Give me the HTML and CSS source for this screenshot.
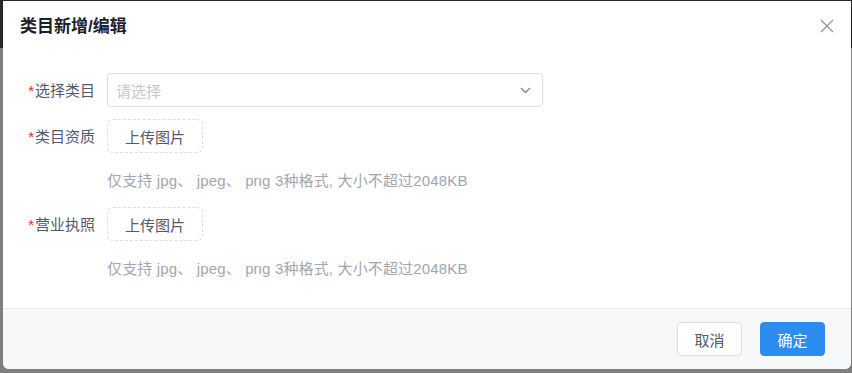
FILE: index.html
```html
<!DOCTYPE html>
<html>
	<head>
		<meta charset="utf-8">
		<link rel="stylesheet" href="styles.css">
	</head>

	<body>
		<div class="backdrop">
			<div class="page-header"></div>
		</div>

		<div class="modal">
			<div class="modal-header">
				<h2 class="modal-title">类目新增/编辑</h2>
				<button class="close-btn" type="button">
					<svg width="14" height="14" viewBox="0 0 14 14">
						<path d="M1 1 L13 13 M13 1 L1 13" stroke="#8f959e" stroke-width="1.2" fill="none"/>
					</svg>
				</button>
			</div>

			<div class="modal-body">
				<form class="form">
					<div class="form-item">
						<label class="form-label"><span class="required">*</span>选择类目</label>
						<div class="form-control">
							<div class="select">
								<span class="placeholder">请选择</span>
								<svg width="11" height="7" viewBox="0 0 11 7">
									<path d="M1 1 L5.5 5.5 L10 1" stroke="#808695" stroke-width="1.4" fill="none"/>
								</svg>
							</div>
						</div>
					</div>

					<div class="form-item">
						<label class="form-label"><span class="required">*</span>类目资质</label>
						<div class="form-control">
							<div class="upload-btn">上传图片</div>
							<div class="hint">仅支持 jpg、 jpeg、 png 3种格式, 大小不超过2048KB</div>
						</div>
					</div>

					<div class="form-item">
						<label class="form-label"><span class="required">*</span>营业执照</label>
						<div class="form-control">
							<div class="upload-btn">上传图片</div>
							<div class="hint">仅支持 jpg、 jpeg、 png 3种格式, 大小不超过2048KB</div>
						</div>
					</div>
				</form>
			</div>

			<div class="modal-footer">
				<button class="btn" type="button">取消</button>
				<button class="btn btn-primary" type="button">确定</button>
			</div>
		</div>
	</body>
</html>
```

FILE: styles.css
```css
* {
	box-sizing: border-box;
}

body {
	margin: 0;
	height: 373px;
	overflow: hidden;
	background: #7f7f7f;
	font-family: "Liberation Sans", "Noto Sans CJK SC", sans-serif;
	font-size: 15px;
	color: #515a6e;
}

.page-header {
	height: 48px;
	background: #262626;
}

.modal {
	position: absolute;
	top: 1px;
	left: 3px;
	width: 848px;
	background: white;
	border-radius: 0 0 6px 6px;
	overflow: hidden;
}

.modal-header {
	display: flex;
	align-items: center;
	justify-content: space-between;
	padding: 14px 17px 0 17px;
}

.modal-title {
	margin: 0;
	font-size: 17px;
	line-height: 24px;
	font-weight: bold;
	color: #1d2129;
}

.close-btn {
	margin-top: -3px;
	padding: 0;
	border: none;
	background: none;
	display: flex;
	cursor: pointer;
}

.modal-body {
	padding: 34px 16px 28px 16px;
}

.form-item {
	display: flex;
	margin-bottom: 12px;
}

.form-item:nth-child(2) {
	margin-bottom: 15px;
}

.form-item:last-child {
	margin-bottom: 0;
}

.form-label {
	width: 88px;
	padding: 1px 12px 0 0;
	height: 34px;
	line-height: 34px;
	text-align: right;
	white-space: nowrap;
	color: #515a6e;
}

.required {
	margin-right: 1px;
	color: #ff2020;
}

.select {
	display: flex;
	align-items: center;
	justify-content: space-between;
	width: 436px;
	height: 34px;
	padding: 0 11px 0 8px;
	border: 1px solid #dcdee2;
	border-radius: 4px;
}

.placeholder {
	color: #c5c8ce;
}

.upload-btn {
	display: flex;
	align-items: center;
	justify-content: center;
	width: 96px;
	height: 34px;
	border: 1px dashed #dcdee2;
	border-radius: 6px;
	color: #515a6e;
}

.hint {
	margin-top: 17px;
	line-height: 22px;
	letter-spacing: 0.15px;
	color: #a3a6ad;
	white-space: nowrap;
}

.modal-footer {
	display: flex;
	justify-content: flex-end;
	gap: 18px;
	padding: 13px 26px 13px 0;
	border-top: 1px solid #e8eaec;
	background: #f7f8fa;
}

.btn {
	width: 65px;
	height: 34px;
	border: 1px solid #dcdee2;
	border-radius: 4px;
	background: white;
	font-family: inherit;
	font-size: 15px;
	color: #515a6e;
	cursor: pointer;
}

.btn-primary {
	border-color: #2d8cf0;
	background: #2d8cf0;
	color: white;
}
```
